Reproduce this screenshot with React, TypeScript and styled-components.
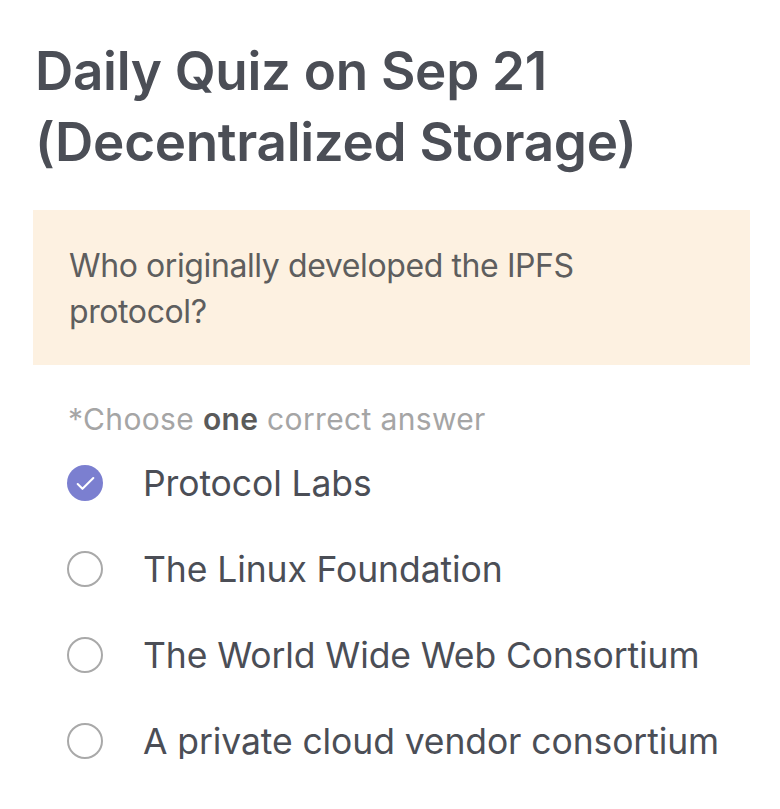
import React, { useState } from "react";
import styled, { createGlobalStyle } from "styled-components";

const GlobalStyle = createGlobalStyle`
  html, body {
    margin: 0;
    padding: 0;
    background: #ffffff;
  }
  body {
    font-family: Inter, "Noto Sans", "Liberation Sans", sans-serif;
  }
`;

const options = [
  "Protocol Labs",
  "The Linux Foundation",
  "The World Wide Web Consortium",
  "A private cloud vendor consortium",
];

const App: React.FC = () => {
  const [selected, setSelected] = useState(0);

  return (
    <Page>
      <GlobalStyle />
      <Title>
        Daily Quiz on Sep 21
        <br />
        (Decentralized Storage)
      </Title>
      <QuestionBox>
        <Question>
          Who originally developed the IPFS
          <br />
          protocol?
        </Question>
      </QuestionBox>
      <Hint>
        *Choose <strong>one</strong> correct answer
      </Hint>
      <OptionList>
        {options.map((label, i) => (
          <Option key={label} onClick={() => setSelected(i)}>
            <Radio checked={selected === i}>
              {selected === i && (
                <CheckIcon viewBox="0 0 24 24" fill="none">
                  <path
                    d="M4.5 12.5l4.6 4.6L19.5 6.8"
                    stroke="#ffffff"
                    strokeWidth="2"
                    strokeLinecap="round"
                    strokeLinejoin="round"
                  />
                </CheckIcon>
              )}
            </Radio>
            <OptionLabel>{label}</OptionLabel>
          </Option>
        ))}
      </OptionList>
    </Page>
  );
};

const Page = styled.div`
  padding: 36px 30px 0 33px;
  color: #4b4e56;
`;

const Title = styled.h1`
  margin: 0 0 0 2px;
  font-size: 53px;
  font-weight: 600;
  line-height: 71px;
  letter-spacing: -0.3px;
  color: #4b4e56;
`;

const QuestionBox = styled.div`
  margin-top: 32px;
  width: 717px;
  box-sizing: border-box;
  background: #fdf1e1;
  padding: 33px 36px 30px;
`;

const Question = styled.p`
  margin: 0;
  font-size: 32px;
  font-weight: 400;
  line-height: 46px;
  color: #5e5e5e;
  letter-spacing: -0.4px;
`;

const Hint = styled.div`
  margin: 36px 0 0 35px;
  font-size: 30px;
  line-height: 36px;
  color: #a5a5a5;
  letter-spacing: 0.35px;

  strong {
    font-weight: 600;
    color: #5a5a5a;
  }
`;

const OptionList = styled.div`
  display: flex;
  flex-direction: column;
  gap: 50px;
  margin: 28px 0 0 34px;
`;

const Option = styled.label`
  display: flex;
  align-items: center;
  height: 36px;
  cursor: pointer;
`;

const Radio = styled.span<{ checked: boolean }>`
  flex: none;
  width: 36px;
  height: 36px;
  box-sizing: border-box;
  border-radius: 50%;
  display: flex;
  align-items: center;
  justify-content: center;
  background: ${(p) => (p.checked ? "#7b7fd0" : "transparent")};
  border: ${(p) => (p.checked ? "none" : "2.5px solid #a9a9a9")};
`;

const CheckIcon = styled.svg`
  width: 25px;
  height: 25px;
  flex: none;
`;

const OptionLabel = styled.span`
  margin-left: 40px;
  font-size: 35.5px;
  font-weight: 400;
  color: #4b4e56;
  letter-spacing: -0.1px;
`;

export default App;
